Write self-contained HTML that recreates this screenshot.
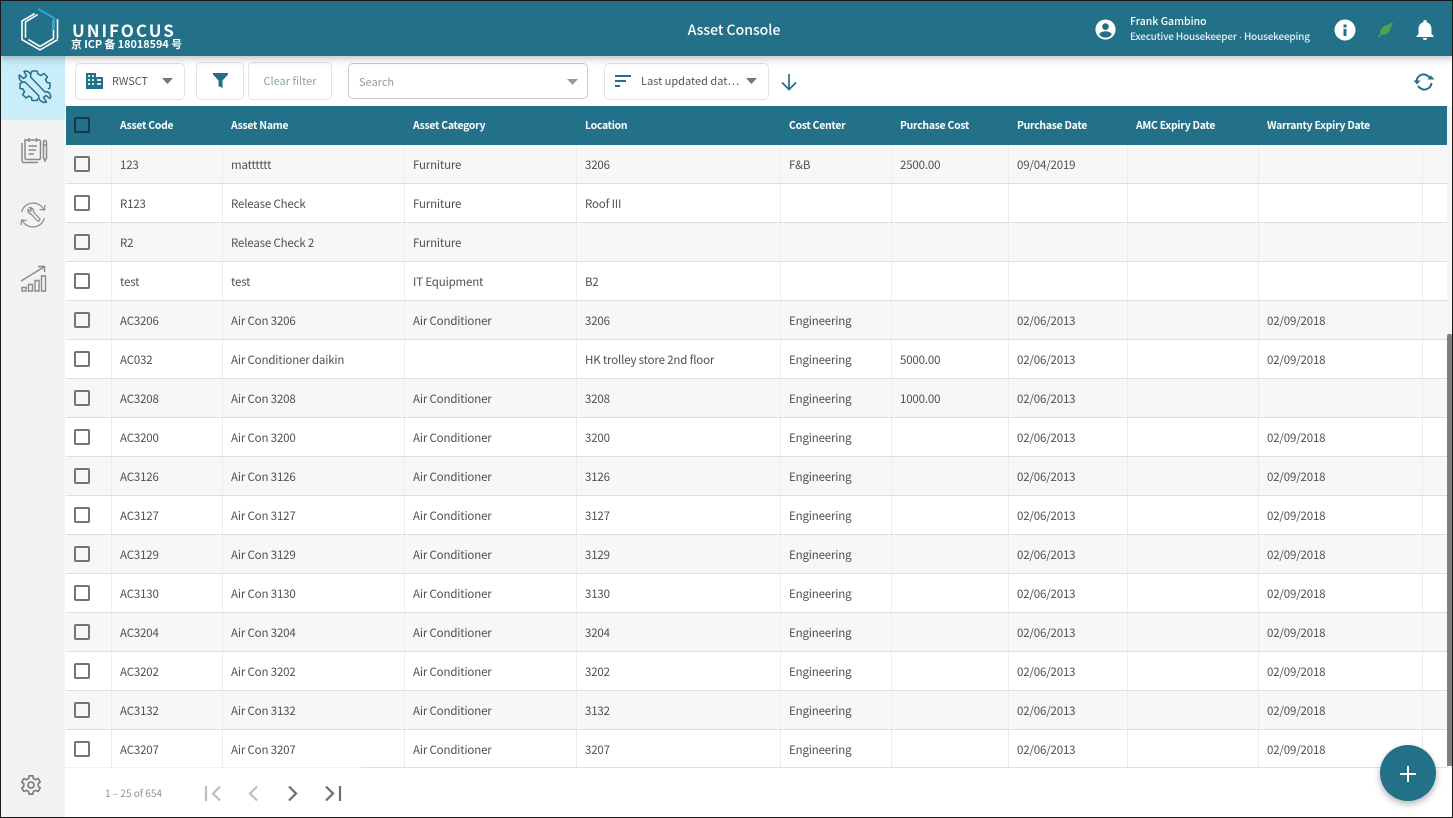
<!DOCTYPE html>
<html><head><meta charset="utf-8">
<style>
*{box-sizing:border-box}
html,body{margin:0;padding:0;width:1453px;height:818px;overflow:hidden;background:#fff}
body{font-family:"Noto Sans CJK SC","Liberation Sans",sans-serif;font-size:12px;color:#555;position:relative}
.abs{position:absolute}
#hdr{left:0;top:0;width:1453px;height:56px;background:#237089;box-shadow:0 2px 8px rgba(0,0,0,.28);z-index:3}
#side{left:0;top:56px;width:65px;height:762px;background:#f2f2f2}
#act{left:0;top:56px;width:65px;height:64px;background:#c9eef9}
.btn{border:1px solid #e2e2e2;border-radius:5px;background:#fff;z-index:1}
table{position:absolute;left:66px;top:106px;width:1381px;border-collapse:separate;border-spacing:0;table-layout:fixed}
th{height:39px;background:#237089;color:#fff;font-size:10.4px;letter-spacing:-.25px;font-weight:700;text-align:left;padding:0 0 2px 8px;line-height:37px;white-space:nowrap}
td{height:39px;padding:2px 0 0 8px;border-right:1px solid #ececec;border-bottom:1px solid #dedede;font-size:11.5px;letter-spacing:-.17px;line-height:36px;color:#505050;white-space:nowrap;overflow:hidden}
tr:nth-child(odd) td{background:#f7f7f7}
tr:nth-child(even) td{background:#fff}
td:last-child{border-right:0}
.cb{display:block;width:16px;height:16px;border:2px solid #757575;border-radius:2px;margin-left:0}
th .cb{border-color:#17394a}
td:first-child{padding:0 0 0 8px}
</style></head><body>

<div class="abs" id="side"></div>
<div class="abs" id="act"></div>

<div class="abs" id="hdr">
<svg class="abs" style="left:20px;top:8px" width="40" height="43" viewBox="0 0 40 43" fill="none" stroke-linecap="square">
<path d="M14 6 L2 13 V31" stroke="#fff" stroke-width="1.6"/>
<path d="M17 7 L5.500 14 V29" stroke="#fff" stroke-width="1.600"/>
<path d="M2.500 32 L20 42 L37 32" stroke="#fff" stroke-width="1.600"/>
<path d="M9 32 L20 38.500 L33.500 30.500 V13" stroke="#fff" stroke-width="1.600"/>
<path d="M37.500 30 V12" stroke="#fff" stroke-width="1.600"/>
<path d="M19 1.500 L34 10 V21" stroke="#25a9dc" stroke-width="2"/>
</svg>
<div class="abs" style="left:72px;top:16px;font-size:17px;font-weight:700;letter-spacing:2px;color:#fff;line-height:28px">UNIFOCUS</div>
<div class="abs" style="left:71px;top:36px;font-size:10.800px;font-weight:700;color:#fff;line-height:17px;white-space:nowrap">京 ICP 备 18018594 号</div>
<div class="abs" style="left:634px;width:200px;top:18px;text-align:center;font-size:14px;font-weight:500;color:#fff;line-height:24px">Asset Console</div>
<svg class="abs" style="left:1094px;top:18px" width="23" height="23" viewBox="0 0 24 24"><path fill="#fff" d="M12 1.500a10.500 10.500 0 1 0 0 21 10.500 10.500 0 0 0 0-21zm0 4a3.500 3.500 0 1 1 0 7 3.500 3.500 0 0 1 0-7zm0 15a8 8 0 0 1-6.500-3.300c.1-2.200 4.300-3.400 6.500-3.400s6.400 1.200 6.500 3.400A8 8 0 0 1 12 20.500z"/></svg>
<div class="abs" style="left:1130px;top:14px;font-size:10.500px;font-weight:500;color:#fff;line-height:16px;white-space:nowrap">Frank Gambino</div>
<div class="abs" style="left:1130px;top:28px;font-size:10px;font-weight:500;color:#e6eff2;line-height:16px;white-space:nowrap;letter-spacing:-.2px">Executive Housekeeper <span style="font-family:'Liberation Sans',sans-serif">·</span> Housekeeping</div>
<svg class="abs" style="left:1334px;top:19px" width="22" height="22" viewBox="0 0 22 22"><circle cx="11" cy="11" r="10.500" fill="#fff"/><rect x="9.500" y="10" width="3" height="7" fill="#237089"/><rect x="9.500" y="5.500" width="3" height="3" fill="#237089"/></svg>
<svg class="abs" style="left:1376px;top:21px" width="18" height="18" viewBox="0 0 18 18"><path fill="#4ea24f" d="M2 15.500 L4.500 12.500 C3.500 9 6.500 5 10 4.500 L13 3 L17 1 L15.500 5 L14 8 C13.500 11.500 10 14.500 6 13.500 L3 16.500z"/></svg>
<svg class="abs" style="left:1415px;top:19px" width="20" height="22" viewBox="0 0 20 22"><path fill="#fff" d="M10 1a1.700 1.700 0 0 0-1.700 1.700v.5C5.300 4 3.500 6.700 3.500 10v5L1.500 17v1h17v-1l-2-2v-5c0-3.300-1.800-6-4.800-6.800v-.5A1.700 1.700 0 0 0 10 1zM7.700 19a2.300 2 0 0 0 4.600 0z"/></svg>
</div>

<!-- sidebar icons -->
<svg class="abs" style="left:17px;top:69px" width="35" height="36" viewBox="0 0 35 36" fill="none" stroke="#237089" stroke-width="1.500" stroke-linejoin="round">
<path d="M14 5 L15 2 L20 2 L21 5 L24 6.500 L27 4.500 L30.500 8 L28.500 10.500 L30 13.500 L33 14 L33 19 L31 20"/>
<path d="M5 14 L3 14.500 L3 19.500 L6 20 L7.500 23 L5.500 25.500 L9 29 L11.500 27 L14.500 28.500 L15 31.500 L20 31.500 L21 29.500"/>
<path d="M2.500 6 L6.500 9.500 L9.500 7 L7 2.500 C10.500 1 14.500 4 13.500 8 L28 23 C32 22 35 26 33 29.500 L29 26.500 L26.500 28.500 L29.500 33 C25.500 34.500 21 31 22 27 L8 13 C4.500 14 1 10 2.500 6z"/>
</svg>
<svg class="abs" style="left:20px;top:137px" width="28" height="27" viewBox="0 0 28 27" fill="none" stroke="#8a8a8a" stroke-width="1.500">
<path d="M5 3 H19 A1.500 1.500 0 0 1 20.500 4.500 V21 A1.500 1.500 0 0 1 19 22.500 H6.500 A1.500 1.500 0 0 1 5 21z"/>
<path d="M2 6 V23.500 A2 2 0 0 0 4 25.500 H18"/>
<path d="M9 1 V5 M16.500 1 V5 M8.500 9 H17 M8.500 13 H16 M8.500 17 H14"/>
<path d="M23.500 5 A1.500 1.500 0 0 1 26.500 5 V21 L25 24 L23.500 21z M23.500 8 H26.500"/>
</svg>
<svg class="abs" style="left:19px;top:200px" width="28" height="28" viewBox="0 0 28 28" fill="none" stroke="#8a8a8a" stroke-width="1.200">
<path d="M2.500 12 A12 12 0 0 1 25 10 M26 5 L25.500 10 L20.500 9.500"/>
<path d="M25.500 18 A12 12 0 0 1 3 20 M2 25 L2.500 20 L7.500 20.500"/>
<path d="M9 9.500 C8.500 12 10 14 12 14 L18 20.500 A1.400 1.400 0 0 0 20.500 18.500 L14.500 12 C15 9.500 13 7.500 10.500 7.500 L12.500 10 L11 11.500 z"/>
</svg>
<svg class="abs" style="left:20px;top:265px" width="27" height="27" viewBox="0 0 27 27" fill="none" stroke="#8a8a8a" stroke-width="1.400">
<path d="M1 16 L24 2 M18 1.500 H24.500 V7"/>
<path d="M2 22.500 H6 V26 H2z M8.500 19.500 H12.500 V26 H8.500z M15 15.500 H19 V26 H15z M21.500 11 H25.500 V26 H21.500z"/>
</svg>
<svg class="abs" style="left:20px;top:774px" width="22" height="22" viewBox="0 0 24 24" fill="none" stroke="#757575" stroke-width="1.700" stroke-linejoin="round">
<path d="M10 2 H14 L14.600 5 L17 6.200 L19.800 5 L22 8.600 L19.800 10.700 V13.300 L22 15.400 L19.800 19 L17 17.800 L14.600 19 L14 22 H10 L9.400 19 L7 17.800 L4.200 19 L2 15.400 L4.200 13.300 V10.700 L2 8.600 L4.200 5 L7 6.200 L9.400 5z"/>
<circle cx="12" cy="12" r="3.300"/>
</svg>

<!-- toolbar -->
<div class="abs btn" style="left:75px;top:63px;width:110px;height:37px"></div>
<svg class="abs" style="left:85px;top:72px;z-index:2" width="19" height="18" viewBox="0 0 19 18"><path fill="#237089" d="M1 1 H11 V5 H18 V17 H1z"/><path fill="#d8e8ee" d="M3 3h2v2H3zM7 3h2v2H7zM3 7h2v2H3zM7 7h2v2H7zM3 11h2v2H3zM7 11h2v2H7zM12 7h4v2h-4zM12 11h4v2h-4z"/></svg>
<div class="abs" style="left:112px;top:72px;font-size:10.800px;line-height:18px;color:#555;z-index:2">RWSCT</div>
<svg class="abs" style="left:162px;top:78px;z-index:2" width="11" height="6"><path d="M0 0H11L5.500 6z" fill="#757575"/></svg>
<div class="abs btn" style="left:196px;top:62px;width:48px;height:38px"></div>
<svg class="abs" style="left:213px;top:73px;z-index:2" width="15" height="15" viewBox="0 0 15 15"><path fill="#237089" d="M0 0H15V1.500L9.500 7.500V15L5.500 13V7.500L0 1.500z"/></svg>
<div class="abs btn" style="left:248px;top:62px;width:84px;height:38px;font-size:11px;line-height:36px;text-align:center;color:#8e9ea4">Clear filter</div>
<div class="abs" style="left:348px;top:63px;width:240px;height:36px;border:1px solid #c8c8c8;border-radius:5px;background:#fff;z-index:1;padding-left:10px;line-height:36px;color:#9a9a9a;font-size:11px">Search</div>
<svg class="abs" style="left:567px;top:79px;z-index:2" width="11" height="6"><path d="M0 0H11L5.500 6z" fill="#9a9a9a"/></svg>
<div class="abs btn" style="left:604px;top:63px;width:165px;height:37px"></div>
<svg class="abs" style="left:615px;top:75px;z-index:2" width="16" height="12"><path fill="#237089" d="M0 0H16V2H0zM0 5H11V7H0zM0 10H5V12H0z"/></svg>
<div class="abs" style="left:641px;top:72px;font-size:11px;line-height:18px;color:#555;z-index:2;white-space:nowrap">Last updated dat…</div>
<svg class="abs" style="left:746px;top:78px;z-index:2" width="11" height="6"><path d="M0 0H11L5.500 6z" fill="#757575"/></svg>
<svg class="abs" style="left:780px;top:73px;z-index:2" width="18" height="18" viewBox="0 0 18 18" fill="none" stroke="#237089" stroke-width="1.700"><path d="M9 1V16M2 9.500L9 16.500L16 9.500"/></svg>
<svg class="abs" style="left:1413px;top:72px;z-index:2" width="22" height="20" viewBox="0 0 22 20" fill="none" stroke="#237089" stroke-width="2"><path d="M3.500 9 C4 4.500 8 2 11.500 2.500 C14 3 15.500 4 17 6"/><path d="M18.500 11 C18 15.500 14 18 10.500 17.500 C8 17 6.500 16 5 14"/><path d="M14.500 7.500H21.500L18 3.500z" fill="#237089" stroke="none"/><path d="M0.500 8.500H7.500L4 12.500z" fill="#237089" stroke="none"/></svg>

<!-- table -->
<table>
<colgroup><col style="width:46px"><col style="width:111px"><col style="width:182px"><col style="width:172px"><col style="width:204px"><col style="width:111px"><col style="width:117px"><col style="width:119px"><col style="width:131px"><col style="width:164px"><col style="width:24px"></colgroup>
<thead><tr><th><span class="cb"></span></th><th>Asset Code</th><th>Asset Name</th><th>Asset Category</th><th>Location</th><th>Cost Center</th><th>Purchase Cost</th><th>Purchase Date</th><th>AMC Expiry Date</th><th>Warranty Expiry Date</th><th></th></tr></thead>
<tbody>
<tr><td><span class="cb"></span></td><td>123</td><td>matttttt</td><td>Furniture</td><td>3206</td><td>F&amp;B</td><td>2500.00</td><td>09/04/2019</td><td></td><td></td><td></td></tr>
<tr><td><span class="cb"></span></td><td>R123</td><td>Release Check</td><td>Furniture</td><td>Roof III</td><td></td><td></td><td></td><td></td><td></td><td></td></tr>
<tr><td><span class="cb"></span></td><td>R2</td><td>Release Check 2</td><td>Furniture</td><td></td><td></td><td></td><td></td><td></td><td></td><td></td></tr>
<tr><td><span class="cb"></span></td><td>test</td><td>test</td><td>IT Equipment</td><td>B2</td><td></td><td></td><td></td><td></td><td></td><td></td></tr>
<tr><td><span class="cb"></span></td><td>AC3206</td><td>Air Con 3206</td><td>Air Conditioner</td><td>3206</td><td>Engineering</td><td></td><td>02/06/2013</td><td></td><td>02/09/2018</td><td></td></tr>
<tr><td><span class="cb"></span></td><td>AC032</td><td>Air Conditioner daikin</td><td></td><td>HK trolley store 2nd floor</td><td>Engineering</td><td>5000.00</td><td>02/06/2013</td><td></td><td>02/09/2018</td><td></td></tr>
<tr><td><span class="cb"></span></td><td>AC3208</td><td>Air Con 3208</td><td>Air Conditioner</td><td>3208</td><td>Engineering</td><td>1000.00</td><td>02/06/2013</td><td></td><td></td><td></td></tr>
<tr><td><span class="cb"></span></td><td>AC3200</td><td>Air Con 3200</td><td>Air Conditioner</td><td>3200</td><td>Engineering</td><td></td><td>02/06/2013</td><td></td><td>02/09/2018</td><td></td></tr>
<tr><td><span class="cb"></span></td><td>AC3126</td><td>Air Con 3126</td><td>Air Conditioner</td><td>3126</td><td>Engineering</td><td></td><td>02/06/2013</td><td></td><td>02/09/2018</td><td></td></tr>
<tr><td><span class="cb"></span></td><td>AC3127</td><td>Air Con 3127</td><td>Air Conditioner</td><td>3127</td><td>Engineering</td><td></td><td>02/06/2013</td><td></td><td>02/09/2018</td><td></td></tr>
<tr><td><span class="cb"></span></td><td>AC3129</td><td>Air Con 3129</td><td>Air Conditioner</td><td>3129</td><td>Engineering</td><td></td><td>02/06/2013</td><td></td><td>02/09/2018</td><td></td></tr>
<tr><td><span class="cb"></span></td><td>AC3130</td><td>Air Con 3130</td><td>Air Conditioner</td><td>3130</td><td>Engineering</td><td></td><td>02/06/2013</td><td></td><td>02/09/2018</td><td></td></tr>
<tr><td><span class="cb"></span></td><td>AC3204</td><td>Air Con 3204</td><td>Air Conditioner</td><td>3204</td><td>Engineering</td><td></td><td>02/06/2013</td><td></td><td>02/09/2018</td><td></td></tr>
<tr><td><span class="cb"></span></td><td>AC3202</td><td>Air Con 3202</td><td>Air Conditioner</td><td>3202</td><td>Engineering</td><td></td><td>02/06/2013</td><td></td><td>02/09/2018</td><td></td></tr>
<tr><td><span class="cb"></span></td><td>AC3132</td><td>Air Con 3132</td><td>Air Conditioner</td><td>3132</td><td>Engineering</td><td></td><td>02/06/2013</td><td></td><td>02/09/2018</td><td></td></tr>
<tr><td><span class="cb"></span></td><td>AC3207</td><td>Air Con 3207</td><td>Air Conditioner</td><td>3207</td><td>Engineering</td><td></td><td>02/06/2013</td><td></td><td>02/09/2018</td><td></td></tr>
</tbody></table>

<!-- scrollbar -->
<div class="abs" style="left:1447px;top:106px;width:6px;height:662px;background:#f4f4f4"></div>
<div class="abs" style="left:1447px;top:334px;width:5px;height:432px;background:#808080;border-radius:2px 2px 0 0"></div>

<!-- footer -->
<div class="abs" style="left:65px;top:768px;width:1388px;height:50px;background:#fff"></div>
<div class="abs" style="left:361px;top:767px;width:1086px;height:1px;background:#dedede"></div>
<div class="abs" style="left:66px;top:767px;width:295px;height:1px;background:#f0f0f0"></div>
<div class="abs" style="left:105px;top:785px;font-size:10px;line-height:16px;color:#8f8f8f">1 – 25 of 654</div>
<svg class="abs" style="left:204px;top:785px" width="18" height="18" fill="none" stroke="#bdbdbd" stroke-width="2.200"><path d="M2 1V16"/><path d="M16 1.500L9 8.500L16 15.500"/></svg>
<svg class="abs" style="left:247px;top:785px" width="12" height="18" fill="none" stroke="#bdbdbd" stroke-width="2.200"><path d="M10 1.500L3 8.500L10 15.500"/></svg>
<svg class="abs" style="left:287px;top:785px" width="12" height="18" fill="none" stroke="#6e6e6e" stroke-width="2.200"><path d="M2 1.500L9 8.500L2 15.500"/></svg>
<svg class="abs" style="left:325px;top:785px" width="18" height="18" fill="none" stroke="#6e6e6e" stroke-width="2.200"><path d="M1 1.500L8 8.500L1 15.500"/><path d="M15 1V16"/></svg>

<!-- FAB -->
<div class="abs" style="left:1380px;top:745px;width:56px;height:56px;border-radius:50%;background:#237089;box-shadow:0 3px 7px rgba(0,0,0,.3);z-index:4"></div>
<svg class="abs" style="left:1400px;top:766px;z-index:5" width="16" height="16"><path d="M7 0H9V7H16V9H9V16H7V9H0V7H7z" fill="#fff"/></svg>

<!-- frame -->
<div class="abs" style="left:0;top:0;width:1453px;height:818px;border:1px solid #1a1a1a;z-index:9;pointer-events:none"></div>
</body></html>
